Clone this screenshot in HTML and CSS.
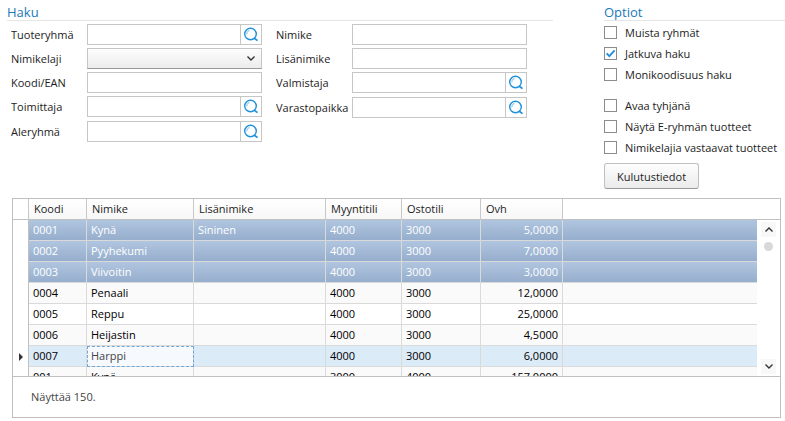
FILE: index.html
```html
<!DOCTYPE html>
<html lang="fi">
<head>
<meta charset="utf-8">
<meta name="viewport" content="width=device-width, initial-scale=1">
<title>Haku</title>
<link rel="stylesheet" href="styles.css">
</head>
<body>

<!-- lens icon used by all lookup buttons -->
<svg class="sprite" width="0" height="0">
  <symbol id="lens" viewBox="0 0 16 16">
    <circle cx="7.5" cy="7" r="5.8" fill="#fff" stroke="#1e90dc" stroke-width="1.4"/>
    <path d="M3.8 7.5A4 4 0 0 1 6.6 3.4" fill="none" stroke="#a4d4f4" stroke-width="1.2"/>
    <path d="M11 11L14.5 13.6" fill="none" stroke="#1e90dc" stroke-width="1.8"/>
  </symbol>
</svg>

<div class="top">
  <form class="search">
    <h2>Haku</h2>
    <div class="columns">
      <div class="column">
        <div class="field">
          <label for="tuoteryhma">Tuoteryhmä</label>
          <div class="lookup">
            <input type="text" id="tuoteryhma">
            <button type="button" aria-label="Hae tuoteryhmä"><svg><use href="#lens"/></svg></button>
          </div>
        </div>
        <div class="field">
          <label for="nimikelaji">Nimikelaji</label>
          <div class="dropdown">
            <select id="nimikelaji"><option></option></select>
            <svg viewBox="0 0 8 5"><path d="M0.5 0.5L4 4L7.5 0.5"/></svg>
          </div>
        </div>
        <div class="field">
          <label for="koodi">Koodi/EAN</label>
          <input type="text" id="koodi">
        </div>
        <div class="field">
          <label for="toimittaja">Toimittaja</label>
          <div class="lookup">
            <input type="text" id="toimittaja">
            <button type="button" aria-label="Hae toimittaja"><svg><use href="#lens"/></svg></button>
          </div>
        </div>
        <div class="field">
          <label for="aleryhma">Aleryhmä</label>
          <div class="lookup">
            <input type="text" id="aleryhma">
            <button type="button" aria-label="Hae aleryhmä"><svg><use href="#lens"/></svg></button>
          </div>
        </div>
      </div>

      <div class="column">
        <div class="field">
          <label for="nimike">Nimike</label>
          <input type="text" id="nimike">
        </div>
        <div class="field">
          <label for="lisanimike">Lisänimike</label>
          <input type="text" id="lisanimike">
        </div>
        <div class="field">
          <label for="valmistaja">Valmistaja</label>
          <div class="lookup">
            <input type="text" id="valmistaja">
            <button type="button" aria-label="Hae valmistaja"><svg><use href="#lens"/></svg></button>
          </div>
        </div>
        <div class="field">
          <label for="varastopaikka">Varastopaikka</label>
          <div class="lookup">
            <input type="text" id="varastopaikka">
            <button type="button" aria-label="Hae varastopaikka"><svg><use href="#lens"/></svg></button>
          </div>
        </div>
      </div>
    </div>
  </form>

  <div class="options">
    <h2>Optiot</h2>
    <div class="checks">
      <label><input type="checkbox">Muista ryhmät</label>
      <label><input type="checkbox" checked>Jatkuva haku</label>
      <label><input type="checkbox">Monikoodisuus haku</label>
    </div>
    <div class="checks">
      <label><input type="checkbox">Avaa tyhjänä</label>
      <label><input type="checkbox">Näytä E-ryhmän tuotteet</label>
      <label><input type="checkbox">Nimikelajia vastaavat tuotteet</label>
    </div>
    <button type="button" class="btn">Kulutustiedot</button>
  </div>
</div>

<div class="panel">
  <div class="grid">
    <div class="rows">
      <table>
        <colgroup>
          <col class="c-mark"><col class="c-koodi"><col class="c-nimike"><col class="c-lisa">
          <col class="c-myynti"><col class="c-osto"><col class="c-ovh"><col>
        </colgroup>
        <thead>
          <tr><th></th><th>Koodi</th><th>Nimike</th><th>Lisänimike</th><th>Myyntitili</th><th>Ostotili</th><th>Ovh</th><th></th></tr>
        </thead>
        <tbody>
          <tr class="selected"><td></td><td>0001</td><td>Kynä</td><td>Sininen</td><td>4000</td><td>3000</td><td class="num">5,0000</td><td></td></tr>
          <tr class="selected"><td></td><td>0002</td><td>Pyyhekumi</td><td></td><td>4000</td><td>3000</td><td class="num">7,0000</td><td></td></tr>
          <tr class="selected"><td></td><td>0003</td><td>Viivoitin</td><td></td><td>4000</td><td>3000</td><td class="num">3,0000</td><td></td></tr>
          <tr class="alt"><td></td><td>0004</td><td>Penaali</td><td></td><td>4000</td><td>3000</td><td class="num">12,0000</td><td></td></tr>
          <tr><td></td><td>0005</td><td>Reppu</td><td></td><td>4000</td><td>3000</td><td class="num">25,0000</td><td></td></tr>
          <tr class="alt"><td></td><td>0006</td><td>Heijastin</td><td></td><td>4000</td><td>3000</td><td class="num">4,5000</td><td></td></tr>
          <tr class="current"><td><svg class="marker" viewBox="0 0 4 8"><path d="M0 0L4 4L0 8Z"/></svg></td><td>0007</td><td class="focus">Harppi</td><td></td><td>4000</td><td>3000</td><td class="num">6,0000</td><td></td></tr>
          <tr class="alt"><td></td><td>001</td><td>Kynä</td><td></td><td>3000</td><td>4000</td><td class="num">157,0000</td><td></td></tr>
        </tbody>
      </table>
    </div>
    <div class="side">
      <div class="side-head"></div>
      <div class="scrollbar">
        <button type="button" aria-label="Ylös"><svg viewBox="0 0 8 5"><path d="M0.5 4.5L4 1L7.5 4.5"/></svg></button>
        <div class="thumb"></div>
        <button type="button" aria-label="Alas"><svg viewBox="0 0 8 5"><path d="M0.5 0.5L4 4L7.5 0.5"/></svg></button>
      </div>
    </div>
  </div>
  <div class="status">Näyttää 150.</div>
</div>

</body>
</html>
```
FILE: styles.css
```css
* {
  box-sizing: border-box;
}

body {
  display: flex;
  flex-direction: column;
  height: 100vh;
  min-height: 360px;
  margin: 0;
  padding-bottom: 3px;
  background: #fff;
  color: #1c1c1c;
  font-family: "Open Sans", "Noto Sans", sans-serif;
  font-size: 11px;
}

input, select, button {
  margin: 0;
  font: inherit;
  color: inherit;
}

.sprite {
  position: absolute;
}

h2 {
  height: 21px;
  margin: 0;
  padding-top: 3px;
  border-bottom: 1px solid #e6e6e6;
  color: #1979ba;
  font-size: 13px;
  font-weight: normal;
  line-height: 18px;
}

/* Search fields and options */
.top {
  display: flex;
  gap: 51px;
  padding-left: 7px;
}

.search {
  flex: 1;
}

.columns {
  display: grid;
  grid-template-columns: minmax(0, 1fr) minmax(0, 1fr);
  gap: 14px;
  padding: 3px 26px 0 4px;
}

.column {
  display: flex;
  flex-direction: column;
  gap: 3px;
}

.field {
  display: flex;
  height: 21px;
}

.field:last-child {
  margin-top: 1px;
}

.field label {
  flex: none;
  width: 73px;
  margin-right: 3px;
  overflow: hidden;
  line-height: 22px;
  white-space: nowrap;
}

.field input {
  flex: 1;
  min-width: 0;
  padding: 0 4px;
  border: 1px solid #c6c6c6;
  background: #fff;
}

.lookup {
  display: flex;
  flex: 1;
  min-width: 0;
}

.lookup button {
  display: flex;
  align-items: center;
  justify-content: center;
  width: 21px;
  padding: 0;
  border: 1px solid #c6c6c6;
  border-left: none;
  background: #fff;
}

.lookup svg {
  width: 16px;
  height: 16px;
}

.dropdown {
  position: relative;
  display: flex;
  flex: 1;
}

.dropdown select {
  flex: 1;
  padding: 0 20px 0 4px;
  border: 1px solid #c6c6c6;
  border-bottom-color: #999;
  border-radius: 0;
  background: linear-gradient(#fdfdfd, #ececec);
  appearance: none;
}

.dropdown svg {
  position: absolute;
  top: 8px;
  right: 7px;
  width: 8px;
  height: 5px;
  pointer-events: none;
}

.dropdown path, .scrollbar path {
  fill: none;
  stroke: #333;
  stroke-width: 1.4;
}

.options {
  flex: none;
  width: 181px;
}

.checks {
  margin: 1px 0 10px;
}

.checks + .checks {
  margin: 0 0 5px;
}

.checks label {
  display: flex;
  align-items: center;
  gap: 8px;
  height: 21px;
  white-space: nowrap;
}

.checks input {
  flex: none;
  width: 13px;
  height: 13px;
  border: 1px solid #8c8c8c;
  background: #fff;
  appearance: none;
}

.checks input:checked {
  background: #fff url("data:image/svg+xml,%3Csvg xmlns='http://www.w3.org/2000/svg' viewBox='0 0 11 11'%3E%3Cpath d='M1.6 5.3L4.4 8.2L9.6 2.4' fill='none' stroke='%231e90dc' stroke-width='1.8'/%3E%3C/svg%3E") center / 11px 11px no-repeat;
}

.btn {
  height: 26px;
  padding: 0 12px;
  border: 1px solid #c0c0c0;
  border-bottom-color: #999;
  border-radius: 3px;
  background: linear-gradient(#fefefe, #ebebeb);
}

/* Result table */
.panel {
  display: flex;
  flex: 1;
  flex-direction: column;
  min-height: 0;
  margin: 9px 4px 0 12px;
  border: 1px solid #c0c0c0;
}

.grid {
  display: flex;
  flex: 1;
  min-height: 0;
}

.rows {
  flex: 1;
  overflow: hidden;
}

table {
  width: 100%;
  border-spacing: 0;
  table-layout: fixed;
}

.c-mark { width: 16px; }
.c-koodi { width: 58px; }
.c-nimike { width: 107px; }
.c-lisa { width: 132px; }
.c-myynti { width: 76px; }
.c-osto { width: 79px; }
.c-ovh { width: 82px; }

th {
  height: 21px;
  padding: 0 5px;
  border-right: 1px solid #c8c8c8;
  border-bottom: 1px solid #c0c0c0;
  background: linear-gradient(#fff, #f7f7f7);
  font-weight: normal;
  line-height: 20px;
  text-align: left;
}

th:first-child, th:last-child {
  background: #fff;
}

td {
  height: 21px;
  padding: 0 4px;
  border-right: 1px solid #dadada;
  border-bottom: 1px solid #dadada;
  color: #000;
  line-height: 20px;
  white-space: nowrap;
}

th:last-child, td:last-child {
  border-right: none;
}

.num {
  text-align: right;
}

.alt td {
  background: #fafafa;
}

.selected td {
  background: linear-gradient(#b0c5df, #96aecd);
  color: #fff;
}

.current td {
  background: #dcebf8;
}

tr td:first-child {
  padding: 0;
  border-right-color: #c0c0c0;
  border-bottom: none;
  background: #fff;
}

.current td.focus {
  outline: 1px dashed #6fa8d6;
  outline-offset: -1px;
  background: #f6fafe;
  color: #444;
}

.marker {
  display: block;
  width: 4px;
  height: 8px;
  margin-left: 6px;
  fill: #333;
}

.side {
  display: flex;
  flex-direction: column;
  width: 23px;
}

.side-head {
  height: 21px;
  border-bottom: 1px solid #c0c0c0;
}

.scrollbar {
  display: flex;
  flex: 1;
  flex-direction: column;
  align-items: center;
  padding: 2px 0;
}

.scrollbar button {
  display: flex;
  align-items: center;
  justify-content: center;
  width: 15px;
  height: 15px;
  padding: 0;
  border: none;
  background: #f8f8f8;
}

.scrollbar button:last-child {
  margin-top: auto;
}

.scrollbar svg {
  width: 8px;
  height: 5px;
}

.thumb {
  width: 9px;
  height: 9px;
  margin-top: 5px;
  border-radius: 50%;
  background: #d8d8d8;
}

.status {
  height: 41px;
  padding-left: 18px;
  border-top: 1px solid #c0c0c0;
  color: #444;
  line-height: 39px;
}
```
